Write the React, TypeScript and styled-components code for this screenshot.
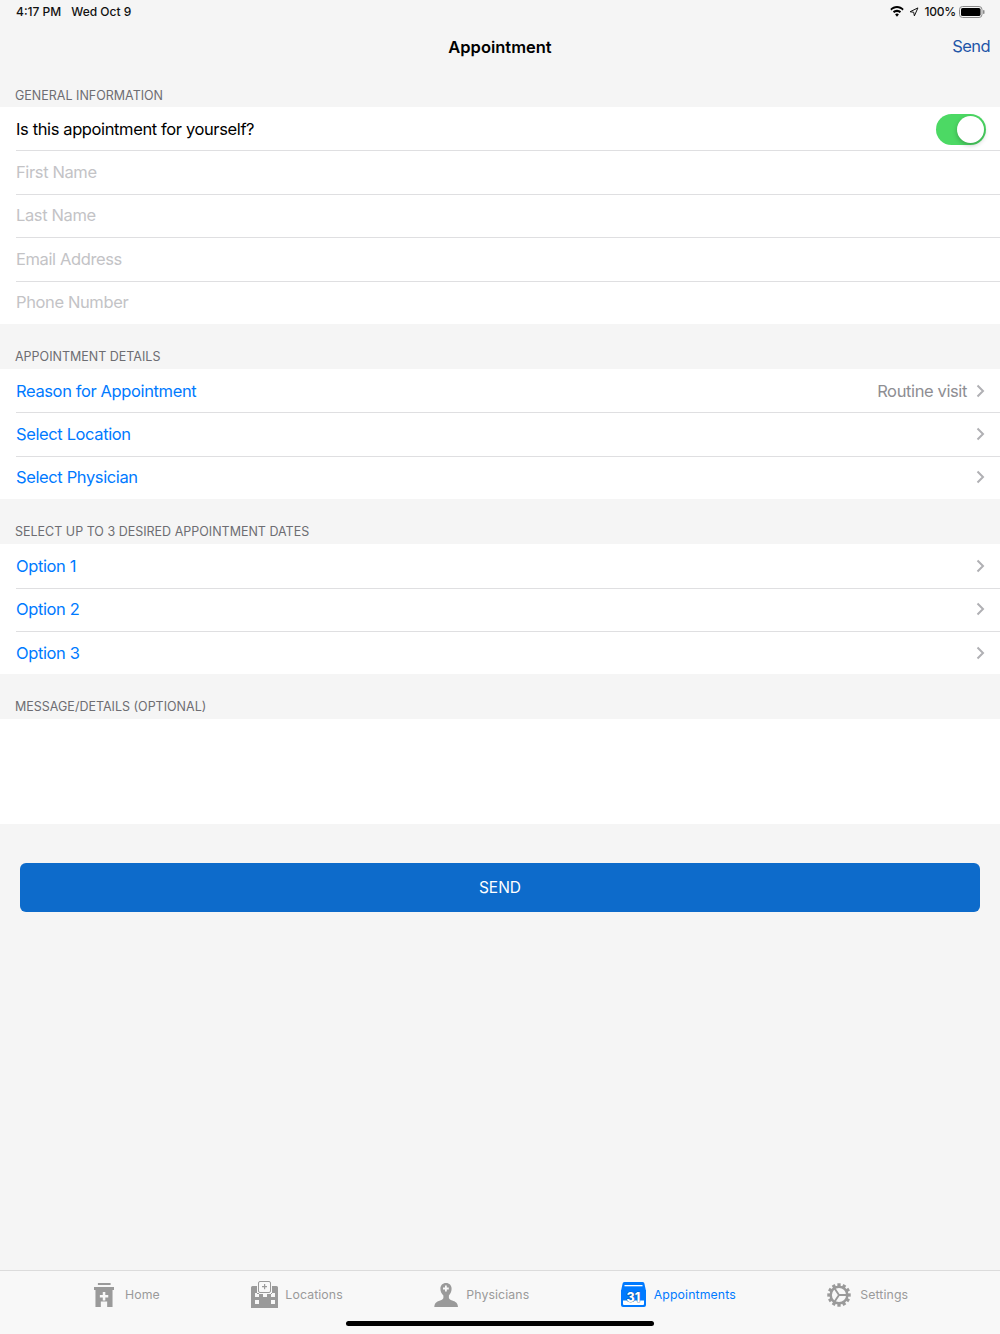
import React from 'react'
import styled, { createGlobalStyle } from 'styled-components'

const GlobalStyle = createGlobalStyle`
  html, body {
    margin: 0;
    padding: 0;
    background: #f5f5f5;
    font-family: Inter, "Liberation Sans", sans-serif;
  }
  * { box-sizing: border-box; }
`

const Page = styled.div`
  position: relative;
  width: 1000px;
  height: 1334px;
  display: flex;
  flex-direction: column;
  background: #f5f5f5;
  overflow: hidden;
`

const StatusBar = styled.div`
  height: 24px;
  padding: 0 15px 1px 16px;
  display: flex;
  align-items: center;
  justify-content: space-between;
  font-size: 12px;
  font-weight: 500;
  color: #111;
`

const StatusLeft = styled.div`
  display: flex;
  gap: 10px;
`

const StatusRight = styled.div`
  display: flex;
  align-items: center;
  gap: 5px;

  svg:last-child {
    margin-left: -2px;
  }
`

const BatteryLevel = styled.span`
  letter-spacing: -0.2px;
`

const NavBar = styled.div`
  position: relative;
  height: 46px;
  display: flex;
  align-items: center;
  justify-content: center;
`

const NavTitle = styled.div`
  font-size: 16.5px;
  font-weight: 600;
  color: #000;
`

const NavAction = styled.div`
  position: absolute;
  right: 10px;
  top: 12px;
  font-size: 16.5px;
  letter-spacing: -0.6px;
  color: #1f56a8;
`

const SectionHeader = styled.div<{ $height?: number; $pad?: number }>`
  height: ${p => p.$height ?? 45}px;
  padding: 0 15px ${p => p.$pad ?? 5}px;
  display: flex;
  align-items: flex-end;
  font-size: 12.5px;
  color: #6d6d72;
`

const Group = styled.div`
  background: #fff;
`

const Row = styled.div<{ $last?: boolean }>`
  position: relative;
  height: 43.4px;
  padding: 0 15px 0 16px;
  display: flex;
  align-items: center;
  justify-content: space-between;
  font-size: 16.5px;
  letter-spacing: -0.38px;

  &::after {
    content: '';
    display: ${p => (p.$last ? 'none' : 'block')};
    position: absolute;
    left: 16px;
    right: 0;
    bottom: -1px;
    height: 1px;
    background: #dfdfe1;
  }
`

const ToggleRow = styled(Row)`
  padding-top: 1px;
`

const RowTitle = styled.span`
  color: #000;
`

const Placeholder = styled.span`
  color: #c3c3c6;
`

const LinkTitle = styled.span`
  color: #007aff;
`

const RowRight = styled.div`
  display: flex;
  align-items: center;
  gap: 9px;
`

const RowValue = styled.span`
  color: #8e8e93;
`

const Switch = styled.div`
  width: 50px;
  height: 31px;
  border-radius: 16px;
  background: #4cd964;
  display: flex;
  align-items: center;
  justify-content: flex-end;
  padding-right: 2px;
  margin-right: -1px;
`

const Knob = styled.div`
  width: 27px;
  height: 27px;
  border-radius: 50%;
  background: #fff;
  box-shadow: 0 2px 5px rgba(0, 0, 0, 0.25);
`

const MessageBox = styled.div`
  height: 105px;
  background: #fff;
`

const SendButton = styled.button`
  display: block;
  width: 960px;
  height: 49px;
  margin: 39px 20px 0;
  border: 0;
  border-radius: 6px;
  background: #0d6bcb;
  color: #fff;
  font-family: inherit;
  font-size: 15.5px;
`

const TabBar = styled.div`
  margin-top: auto;
  height: 64px;
  padding: 0 0 16px 94px;
  border-top: 1px solid #dcdcdc;
  background: #f8f8f8;
  display: flex;
  align-items: center;
  gap: 91.5px;
`

const Tab = styled.div<{ $active?: boolean; $gap?: number }>`
  display: flex;
  align-items: center;
  gap: ${p => p.$gap ?? 8}px;
  font-size: 12.3px;
  letter-spacing: 0.1px;
  color: ${p => (p.$active ? '#007aff' : '#9a9a9a')};
`

const HomeIndicator = styled.div`
  position: absolute;
  left: 346px;
  bottom: 8px;
  width: 308px;
  height: 5px;
  border-radius: 3px;
  background: #000;
`

const Chevron = () => (
  <svg width="9" height="14" viewBox="0 0 9 14" fill="none">
    <path d="M1.5 1.5 7 7l-5.5 5.5" stroke="#b0b0b4" strokeWidth="2" />
  </svg>
)

const WifiIcon = () => (
  <svg width="14" height="11" viewBox="0 0 15 11" preserveAspectRatio="none">
    <path d="M7.5 0C4.7 0 2.2 1.1.3 2.9l1.4 1.5C3.2 3 5.2 2.1 7.5 2.1s4.3.9 5.8 2.3l1.4-1.5C12.8 1.1 10.3 0 7.5 0z" fill="#000" />
    <path d="M7.5 3.8c-1.7 0-3.3.7-4.4 1.8l1.4 1.5c.8-.8 1.9-1.2 3-1.2s2.2.4 3 1.2l1.4-1.5c-1.1-1.1-2.7-1.8-4.4-1.8z" fill="#000" />
    <path d="M7.5 7.6c-.8 0-1.5.3-2 .8l2 2.4 2-2.4c-.5-.5-1.2-.8-2-.8z" fill="#000" />
  </svg>
)

const LocationIcon = () => (
  <svg width="10" height="10" viewBox="0 0 11 11" fill="none">
    <path d="M9.8 1 1.2 5.2l4 .6.7 4z" stroke="#111" strokeWidth="1.1" strokeLinejoin="round" />
  </svg>
)

const BatteryIcon = () => (
  <svg width="26" height="12" viewBox="0 0 26 12">
    <rect x="0.5" y="0.5" width="22.5" height="11" rx="3" fill="none" stroke="#8a8a8a" />
    <rect x="2" y="2" width="19.5" height="8" rx="1.6" fill="#000" />
    <rect x="24" y="4" width="1.5" height="4" rx="0.7" fill="#8a8a8a" />
  </svg>
)

const HomeIcon = () => (
  <svg width="20" height="24" viewBox="0 0 20.5 24" preserveAspectRatio="none" fill="#9a9a9a">
    <rect x="4" y="0" width="13" height="2" />
    <rect x="0" y="4" width="20.5" height="3" />
    <path fillRule="evenodd" d="M1.5 6H19v18h-5.500v-5.500H7V24H1.500zM9 9v3H6v2.400h3v3h2.600v-3h3V12h-3V9z" />
  </svg>
)

const LocationsIcon = () => (
  <svg width="27" height="27" viewBox="0 0 27 27" fill="#9a9a9a">
    <rect x="7.5" y="0.5" width="12" height="11" rx="1.5" fill="none" stroke="#9a9a9a" />
    <path d="M13 3h1.200v2H16v1.200h-1.800v2H13v-2h-2V5h2z" />
    <path fillRule="evenodd" d="M1.500 5H6v8h15V5h4.500A1.500 1.500 0 0 1 27 6.500V27H0V6.500A1.500 1.500 0 0 1 1.500 5zM4 12v4h4v-4zM20 12v4h4v-4zM12 13v3h4v-3zM4 19v4h4v-4zM20 19v4h4v-4z" />
  </svg>
)

const PhysiciansIcon = () => (
  <svg width="24" height="24" viewBox="0 0 24 24" fill="#9a9a9a">
    <path fillRule="evenodd" d="M12 0c3.300 0 5.600 2.300 5.600 5.800 0 2.700-1.100 5.200-2.700 6.600v2.400c0 1.300 1.200 2 3.300 2.700 3.200 1.100 5.500 2.200 5.800 6.500H.3c.3-4.300 2.600-5.400 5.800-6.500 2.100-.7 3.300-1.400 3.300-2.700v-2.400C7.500 11 6.400 8.500 6.400 5.800 6.400 2.300 8.700 0 12 0zM11 2.600v2H9v1.800h2v2h1.800v-2h2V4.600h-2v-2z" />
  </svg>
)

const AppointmentsIcon = () => (
  <svg width="25" height="25" viewBox="0 0 25 25">
    <path d="M3.500 0h18a2 2 0 0 1 2 2l1.500 7H0l1.500-7a2 2 0 0 1 2-2z" fill="#007aff" />
    <rect x="3.500" y="3" width="18" height="1.300" fill="#fff" />
    <path d="M0 8h25v15a2 2 0 0 1-2 2H2a2 2 0 0 1-2-2z" fill="#007aff" />
    <path d="M2 18.500h21V22a1 1 0 0 1-1 1H3a1 1 0 0 1-1-1z" fill="#fff" />
    <text x="12.500" y="19.500" textAnchor="middle" fontFamily="Inter, sans-serif" fontSize="12.500" fontWeight="800" fill="#fff" stroke="#0a3f80" strokeWidth="0.7" paintOrder="stroke">31</text>
  </svg>
)

const SettingsIcon = () => {
  const teeth = Array.from({ length: 12 }, (_, i) => i * 30)
  return (
    <svg width="24" height="24" viewBox="0 0 25 25" fill="none">
      {teeth.map(a => (
        <rect key={a} x="10.800" y="0.300" width="3.400" height="4" fill="#9a9a9a" transform={`rotate(${a} 12.500 12.500)`} />
      ))}
      <circle cx="12.500" cy="12.500" r="8.700" stroke="#9a9a9a" strokeWidth="2.600" />
      <path d="M12.500 12.500 7.800 5.500M12.500 12.500 7.800 19.500M12.500 12.500H21" stroke="#9a9a9a" strokeWidth="2" />
    </svg>
  )
}

const contactFields = ['First Name', 'Last Name', 'Email Address', 'Phone Number']
const dateOptions = ['Option 1', 'Option 2', 'Option 3']

export default function App() {
  return (
    <Page>
      <GlobalStyle />
      <StatusBar>
        <StatusLeft>
          <span>4:17 PM</span>
          <span>Wed Oct 9</span>
        </StatusLeft>
        <StatusRight>
          <WifiIcon />
          <LocationIcon />
          <BatteryLevel>100%</BatteryLevel>
          <BatteryIcon />
        </StatusRight>
      </StatusBar>
      <NavBar>
        <NavTitle>Appointment</NavTitle>
        <NavAction>Send</NavAction>
      </NavBar>

      <SectionHeader $height={37} $pad={4}>GENERAL INFORMATION</SectionHeader>
      <Group>
        <ToggleRow>
          <RowTitle>Is this appointment for yourself?</RowTitle>
          <Switch>
            <Knob />
          </Switch>
        </ToggleRow>
        {contactFields.map((field, i) => (
          <Row key={field} $last={i === contactFields.length - 1}>
            <Placeholder>{field}</Placeholder>
          </Row>
        ))}
      </Group>

      <SectionHeader>APPOINTMENT DETAILS</SectionHeader>
      <Group>
        <Row>
          <LinkTitle>Reason for Appointment</LinkTitle>
          <RowRight>
            <RowValue>Routine visit</RowValue>
            <Chevron />
          </RowRight>
        </Row>
        <Row>
          <LinkTitle>Select Location</LinkTitle>
          <Chevron />
        </Row>
        <Row $last>
          <LinkTitle>Select Physician</LinkTitle>
          <Chevron />
        </Row>
      </Group>

      <SectionHeader>SELECT UP TO 3 DESIRED APPOINTMENT DATES</SectionHeader>
      <Group>
        {dateOptions.map((option, i) => (
          <Row key={option} $last={i === dateOptions.length - 1}>
            <LinkTitle>{option}</LinkTitle>
            <Chevron />
          </Row>
        ))}
      </Group>

      <SectionHeader>MESSAGE/DETAILS (OPTIONAL)</SectionHeader>
      <MessageBox />

      <SendButton>SEND</SendButton>

      <TabBar>
        <Tab $gap={11}><HomeIcon />Home</Tab>
        <Tab $gap={7}><LocationsIcon />Locations</Tab>
        <Tab><PhysiciansIcon />Physicians</Tab>
        <Tab $active><AppointmentsIcon />Appointments</Tab>
        <Tab $gap={9}><SettingsIcon />Settings</Tab>
      </TabBar>
      <HomeIndicator />
    </Page>
  )
}
